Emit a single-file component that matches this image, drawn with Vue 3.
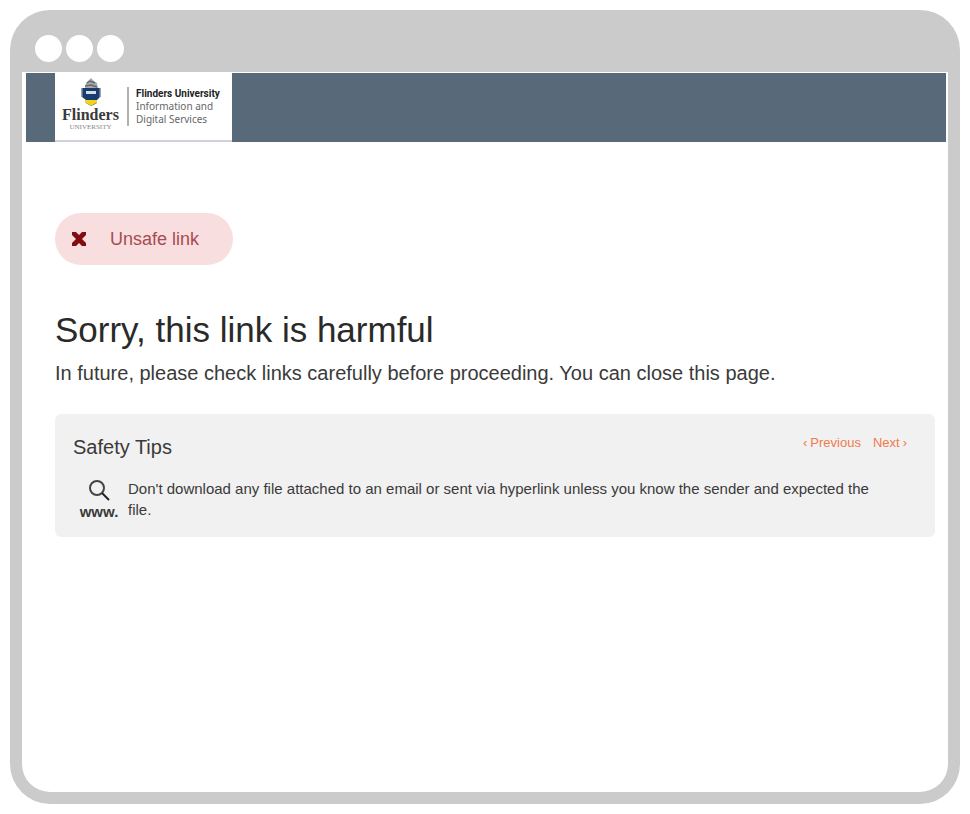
<script setup>
import { ref } from 'vue'

const tips = [
  "Don't download any file attached to an email or sent via hyperlink unless you know the sender and expected the file."
]
const current = ref(0)

function step(by) {
  current.value = (current.value + by + tips.length) % tips.length
}
</script>

<template>
  <div class="browser">
    <div class="chrome">
      <span class="dot"></span>
      <span class="dot"></span>
      <span class="dot"></span>
    </div>
    <div class="page">
      <header class="banner">
        <div class="brand">
          <div class="university">
            <svg class="crest" viewBox="0 0 22 29" aria-hidden="true">
              <path d="M5 10 L6 5 L8 3 L11 0 L14 3 L17 5 L18 10 Z" fill="#a8aaad" />
              <path d="M7 5 L10 3 L15 5 M5 8 L11 7 L17 9" fill="none" stroke="#66696d" stroke-width="1.5" />
              <path d="M2 10 H20 V19 L17 22 V25 L11 28 L6 25 V22 L2 19 Z" fill="#183b70" />
              <path d="M2 19 V10 M20 19 V10" fill="none" stroke="#7b8290" stroke-width="1.5" />
              <path d="M6 13 H16 V16 H6 Z" fill="#d5dce6" />
              <path d="M5 22 H17 V25 L14 26 L11 28 L8 26 L5 25 Z" fill="#f3d31c" />
            </svg>
            <span class="name">Flinders</span>
            <span class="sub">UNIVERSITY</span>
          </div>
          <div class="department">
            <strong>Flinders University</strong>
            <span>Information and</span>
            <span>Digital Services</span>
          </div>
        </div>
      </header>
      <main class="content">
        <div class="badge">
          <svg class="cross" viewBox="0 0 14 14" aria-hidden="true">
            <path d="M0 0 H4 L7 3 L10 0 H14 V3 L10 7 L14 11 V14 H10 L7 11 L4 14 H0 V11 L4 7 L0 3 Z" fill="#850b12" />
          </svg>
          <span>Unsafe link</span>
        </div>
        <h1>Sorry, this link is harmful</h1>
        <p class="advice">In future, please check links carefully before proceeding. You can close this page.</p>
        <section class="tips">
          <div class="tips-head">
            <h2>Safety Tips</h2>
            <nav class="pager">
              <button type="button" @click="step(-1)"><span>‹</span><span>Previous</span></button>
              <button type="button" @click="step(1)"><span>Next</span><span>›</span></button>
            </nav>
          </div>
          <div class="tip">
            <div class="web">
              <svg class="lens" viewBox="0 0 22 22" aria-hidden="true">
                <circle cx="9" cy="9" r="7" fill="none" stroke="#444" stroke-width="2" />
                <path d="M14 14 L21 21" stroke="#222" stroke-width="2" />
              </svg>
              <span>www.</span>
            </div>
            <p>{{ tips[current] }}</p>
          </div>
        </section>
      </main>
    </div>
  </div>
</template>

<style>
body {
  background: #fff;
}
</style>

<style scoped>
.browser {
  box-sizing: border-box;
  display: flex;
  flex-direction: column;
  min-height: calc(100vh - 20px);
  margin: 10px;
  padding: 0 12px 12px;
  border-radius: 40px;
  background: #cbcbcb;
  font-family: "Liberation Sans", Arial, sans-serif;
  color: #3a3a3a;
}

.chrome {
  display: flex;
  gap: 4px;
  padding: 25px 13px 10px;
}

.dot {
  width: 27px;
  height: 27px;
  border-radius: 50%;
  background: #fff;
}

.page {
  flex: 1;
  overflow: hidden;
  border-radius: 0 0 28px 28px;
  background: #fff;
}

.banner {
  display: flex;
  height: 69px;
  margin: 1px 2px 0 4px;
  padding-left: 29px;
  background: #586a7a;
}

.brand {
  box-sizing: border-box;
  display: flex;
  align-items: flex-start;
  gap: 8px;
  width: 177px;
  height: 69px;
  padding: 5px 7px 0;
  border-bottom: 2px solid #cdd3d8;
  background: #fff;
}

.university {
  display: flex;
  flex-direction: column;
  align-items: center;
  width: 57px;
}

.crest {
  width: 22px;
  height: 29px;
}

.name {
  font: bold 16px/16px "Liberation Serif", serif;
}

.sub {
  font: 7px/8px "Liberation Serif", serif;
  color: #888;
}

.department {
  display: flex;
  flex-direction: column;
  margin-top: 9px;
  padding-left: 7px;
  border-left: 2px solid #b0b0b0;
  color: #666;
  font-family: "Noto Sans", sans-serif;
  font-size: 10px;
  line-height: 13px;
  white-space: nowrap;
}

.department strong {
  font-family: Roboto, sans-serif;
  color: #222;
}

.content {
  padding: 71px 13px 32px 33px;
}

.badge {
  box-sizing: border-box;
  display: inline-flex;
  align-items: center;
  gap: 24px;
  height: 52px;
  padding: 0 34px 0 17px;
  border-radius: 26px;
  background: #f9dedf;
  color: #a94b52;
  font-size: 18px;
}

.cross {
  width: 14px;
  height: 14px;
}

h1 {
  margin: 44px 0 0;
  font-size: 35px;
  line-height: 42px;
  font-weight: 400;
  color: #2a2a2a;
}

.advice {
  margin: 9px 0 0;
  font-size: 20px;
  line-height: 26px;
}

.tips {
  margin-top: 28px;
  padding: 18px 28px 16px 18px;
  border-radius: 6px;
  background: #f1f1f1;
}

.tips-head {
  display: flex;
  justify-content: space-between;
  align-items: flex-start;
}

h2 {
  margin: 0;
  font-size: 20px;
  line-height: 30px;
  font-weight: 400;
}

.pager {
  display: flex;
  gap: 12px;
}

.pager button {
  display: flex;
  gap: 3px;
  padding: 0;
  border: 0;
  background: none;
  color: #ef7b4d;
  font: 13px/22px "Liberation Sans", Arial, sans-serif;
  cursor: pointer;
}

.tip {
  display: flex;
  gap: 9px;
  margin-top: 16px;
  padding-right: 16px;
}

.web {
  display: flex;
  flex-direction: column;
  align-items: center;
  gap: 2px;
  width: 40px;
  margin-left: 6px;
  padding-top: 1px;
  font-size: 15px;
  line-height: 18px;
  font-weight: 700;
}

.lens {
  width: 22px;
  height: 22px;
}

.tip p {
  flex: 1;
  margin: 0;
  font-size: 15px;
  line-height: 21px;
}
</style>
